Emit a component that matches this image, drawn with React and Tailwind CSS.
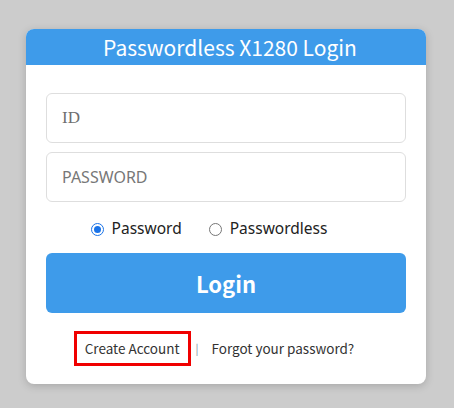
export default function App() {
  return (
    <div className="min-h-[408px] w-full bg-[#cccccc] pt-[29px]" style={{ fontFamily: '"Noto Sans CJK KR", "Noto Sans", sans-serif' }}>
      <div className="ml-[26px] w-[400px] rounded-lg bg-white pb-[18px] shadow-[0_2px_8px_rgba(0,0,0,0.18)]">
        <div className="flex h-[36px] items-center justify-center rounded-t-lg bg-[#3e9bea]">
          <h1 className="pl-[8px] text-[21px] leading-none text-white">Passwordless X1280 Login</h1>
        </div>

        <div className="px-5 pt-[28px]">
          <div className="flex flex-col gap-[9px]">
            <div className="flex h-[50px] items-center rounded-md border border-[#dedede] px-[15px]">
              <span className="text-[17px] text-[#6f6f6f]" style={{ fontFamily: '"Liberation Serif", serif' }}>ID</span>
            </div>
            <div className="flex h-[50px] items-center rounded-md border border-[#dedede] px-[15px]">
              <span className="text-[16px] text-[#777777]" style={{ fontFamily: '"Noto Sans", sans-serif' }}>PASSWORD</span>
            </div>
          </div>

          <div className="flex h-[51px] items-center justify-center gap-[27px] pr-[34px] pt-[3px] text-[15.5px] text-[#222]" style={{ fontFamily: '"Noto Sans", sans-serif' }}>
            <label className="flex items-center gap-[8px]">
              <span className="flex h-[13px] w-[13px] items-center justify-center rounded-full border border-[#1a73e8]">
                <span className="h-[7px] w-[7px] rounded-full bg-[#1a73e8]" />
              </span>
              Password
            </label>
            <label className="flex items-center gap-[8px]">
              <span className="h-[13px] w-[13px] rounded-full border border-[#767676]" />
              Passwordless
            </label>
          </div>

          <button className="flex h-[60px] w-full items-center justify-center rounded-md bg-[#3e9bea] text-[22px] font-bold text-white">
            Login
          </button>

          <div className="mt-[18px] flex items-center justify-center pr-[24px] text-[13.5px] text-[#333]">
            <span className="border-[3px] border-[#f00000] px-[8px] py-[4px] leading-[21px]">Create Account</span>
            <span className="ml-[5px] mr-[13px] text-[11px] text-[#7a8aa0]">|</span>
            <span>Forgot your password?</span>
          </div>
        </div>
      </div>
    </div>
  );
}
